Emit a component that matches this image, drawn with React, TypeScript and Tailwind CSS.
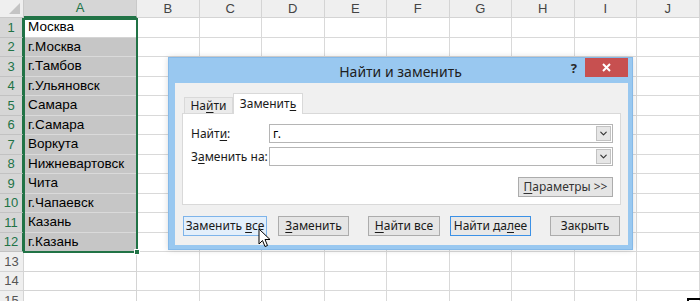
import React from "react";
import { ChevronDown } from "lucide-react";

const cols = ["A", "B", "C", "D", "E", "F", "G", "H", "I", "J"];
const cities = [
  "Москва",
  "г.Москва",
  "г.Тамбов",
  "г.Ульяновск",
  "Самара",
  "г.Самара",
  "Воркута",
  "Нижневартовск",
  "Чита",
  "г.Чапаевск",
  "Казань",
  "г.Казань",
];

// text with one underlined (mnemonic) letter
function Mn({ text, at }: { text: string; at: number }) {
  return (
    <span>
      {text.slice(0, at)}
      <span className="underline underline-offset-2">{text[at]}</span>
      {text.slice(at + 1)}
    </span>
  );
}

function Sheet() {
  const rows = Array.from({ length: 15 }, (_, i) => i + 1);
  return (
    <div
      className="grid grid-cols-[24px_113px_repeat(9,62.5px)] grid-rows-[18px_repeat(15,19.5px)] font-['Liberation_Sans',sans-serif]"
    >
      {/* corner */}
      <div className="relative bg-[#efefef] border-r border-b border-[#c9c9c9]">
        <div className="absolute right-[3px] bottom-[3px] w-0 h-0 border-l-[11px] border-l-transparent border-b-[11px] border-b-[#c4c4c4]" />
      </div>
      {cols.map((c) => (
        <div
          key={c}
          className={
            c === "A"
              ? "flex items-center justify-center bg-[#d6d6d6] text-[#217346] text-[13px] border-r border-b-2 border-r-[#c9c9c9] border-b-[#217346]"
              : "flex items-center justify-center bg-[#efefef] text-[#444] text-[13px] border-r border-b border-[#d4d4d4]"
          }
        >
          {c}
        </div>
      ))}
      {rows.map((r) => (
        <React.Fragment key={r}>
          <div
            className={
              r <= 12
                ? "flex items-center justify-center bg-[#d6d6d6] text-[#217346] text-[13px] border-r-2 border-b border-r-[#217346] border-b-[#c2c2c2]"
                : "flex items-center justify-center bg-[#efefef] text-[#555] text-[13px] border-r border-b border-[#d4d4d4]"
            }
          >
            {r}
          </div>
          <div
            className={
              r === 1
                ? "flex items-center pl-[4px] bg-white text-[13.5px] text-black border-b border-[#d4d4d4]"
                : r <= 12
                ? "flex items-center pl-[4px] bg-[#c6c6c6] text-[13.5px] text-black border-b border-[#dadada]"
                : "flex items-center pl-[4px] bg-white text-[13.5px] border-r border-b border-[#d4d4d4]"
            }
          >
            {cities[r - 1] ?? ""}
          </div>
          {cols.slice(1).map((c) => (
            <div key={c} className="bg-white border-r border-b border-[#d9d9d9]" />
          ))}
        </React.Fragment>
      ))}
    </div>
  );
}

function Btn({
  children,
  w,
  kind = "normal",
}: {
  children: React.ReactNode;
  w: string;
  kind?: "normal" | "hover" | "default";
}) {
  const cls =
    kind === "hover"
      ? "bg-[#e3effb] border-[#7eb4ea]"
      : kind === "default"
      ? "bg-[#e8e8e8] border-[#3c91e6]"
      : "bg-[#e5e5e5] border-[#acacac]";
  return (
    <div
      className={`${w} h-[20px] flex items-center justify-center border text-[12px] text-[#1a1a1a] ${cls}`}
    >
      {children}
    </div>
  );
}

function Combo({ value }: { value: string }) {
  return (
    <div className="flex-1 h-[19px] flex items-center bg-white border border-[#b5b5b5]">
      <span className="flex-1 pl-[3px] text-[12px] text-black">{value}</span>
      <div className="w-[15px] h-[15px] mr-px flex items-center justify-center bg-[#e6e6e6] border border-[#c2c2c2]">
        <ChevronDown size={11} strokeWidth={2.5} className="text-[#333]" />
      </div>
    </div>
  );
}

function Dialog() {
  return (
    <div className="absolute left-[168px] top-[57px] w-[465px] h-[193px] flex flex-col bg-[#99c8f0] border border-[#85b9e8] font-['Noto_Sans',sans-serif] shadow-[0_0_6px_rgba(0,0,0,0.15)]">
      <div className="relative h-[25px] flex items-center justify-center">
        <span className="text-[14px] text-[#1e1e1e] pt-px">Найти и заменить</span>
        <span className="absolute right-[55px] top-[1px] text-[13px] font-bold text-[#2a2a2a]">?</span>
        <div className="absolute right-[4px] top-0 w-[43px] h-[19px] flex items-center justify-center bg-[#c75050]">
          <svg width="9" height="9" viewBox="0 0 9 9">
            <path d="M1 1 L8 8 M8 1 L1 8" stroke="white" strokeWidth="2" />
          </svg>
        </div>
      </div>
      <div className="flex-1 ml-[6px] mr-[4px] mb-[4px] bg-[#f0f0f0] flex flex-col px-[7px] pt-[10px]">
        {/* tabs */}
        <div className="flex items-end pl-[2px] h-[20px] relative z-10">
          <div className="w-[49px] h-[16px] flex items-center justify-center bg-[#ebebeb] border border-b-0 border-[#d9d9d9] text-[12px] text-[#1a1a1a]">
            <Mn text="Найти" at={2} />
          </div>
          <div className="w-[70px] h-[21px] -mb-px flex items-center justify-center bg-white border border-b-0 border-[#d9d9d9] text-[12px] text-[#1a1a1a]">
            <Mn text="Заменить" at={7} />
          </div>
        </div>
        {/* panel */}
        <div className="h-[92px] bg-white border border-[#d9d9d9] flex flex-col pt-[10px] pl-[8px] pr-[7px]">
          <div className="flex items-center gap-0">
            <span className="w-[78px] text-[12px] text-[#1a1a1a]">
              <Mn text="Найти:" at={4} />
            </span>
            <Combo value="г." />
          </div>
          <div className="flex items-center mt-[4px]">
            <span className="w-[78px] text-[12px] text-[#1a1a1a]">
              <Mn text="Заменить на:" at={1} />
            </span>
            <Combo value="" />
          </div>
          <div className="flex justify-end mt-[11px]">
            <Btn w="w-[95px]">
              <span className="text-[#333]">
                <Mn text="Параметры >>" at={0} />
              </span>
            </Btn>
          </div>
        </div>
        {/* buttons */}
        <div className="flex items-center mt-[11px] pl-px">
          <Btn w="w-[84px]" kind="hover">
            <Mn text="Заменить все" at={9} />
          </Btn>
          <div className="ml-[11px]">
            <Btn w="w-[71px]">
              <Mn text="Заменить" at={0} />
            </Btn>
          </div>
          <div className="ml-[19px]">
            <Btn w="w-[72px]">
              <Mn text="Найти все" at={0} />
            </Btn>
          </div>
          <div className="ml-[10px]">
            <Btn w="w-[81px]" kind="default">
              <Mn text="Найти далее" at={8} />
            </Btn>
          </div>
          <div className="ml-[19px]">
            <Btn w="w-[70px]">Закрыть</Btn>
          </div>
        </div>
      </div>
    </div>
  );
}

export default function App() {
  return (
    <div className="relative w-[700px] h-[301px] overflow-hidden bg-white">
      <Sheet />
      {/* selection outline A1:A12 */}
      <div className="absolute left-[23px] top-[18px] w-[115px] h-[235px] border-2 border-[#217346] pointer-events-none" />
      <div className="absolute left-[134px] top-[249px] w-[6px] h-[6px] bg-[#217346] border border-white" />
      <Dialog />
      {/* mouse pointer */}
      <svg className="absolute left-[258px] top-[228px]" width="13" height="21" viewBox="0 0 13 21">
        <path
          d="M1 1 L1 16 L4.5 12.5 L7 18.5 L9.5 17.5 L7 11.5 L12 11.5 Z"
          fill="white"
          stroke="black"
          strokeWidth="1"
          strokeLinejoin="round"
        />
      </svg>
      <div className="absolute left-[687px] top-[298px] w-[13px] h-[3px] border-t-2 border-l-2 border-black" />
    </div>
  );
}
